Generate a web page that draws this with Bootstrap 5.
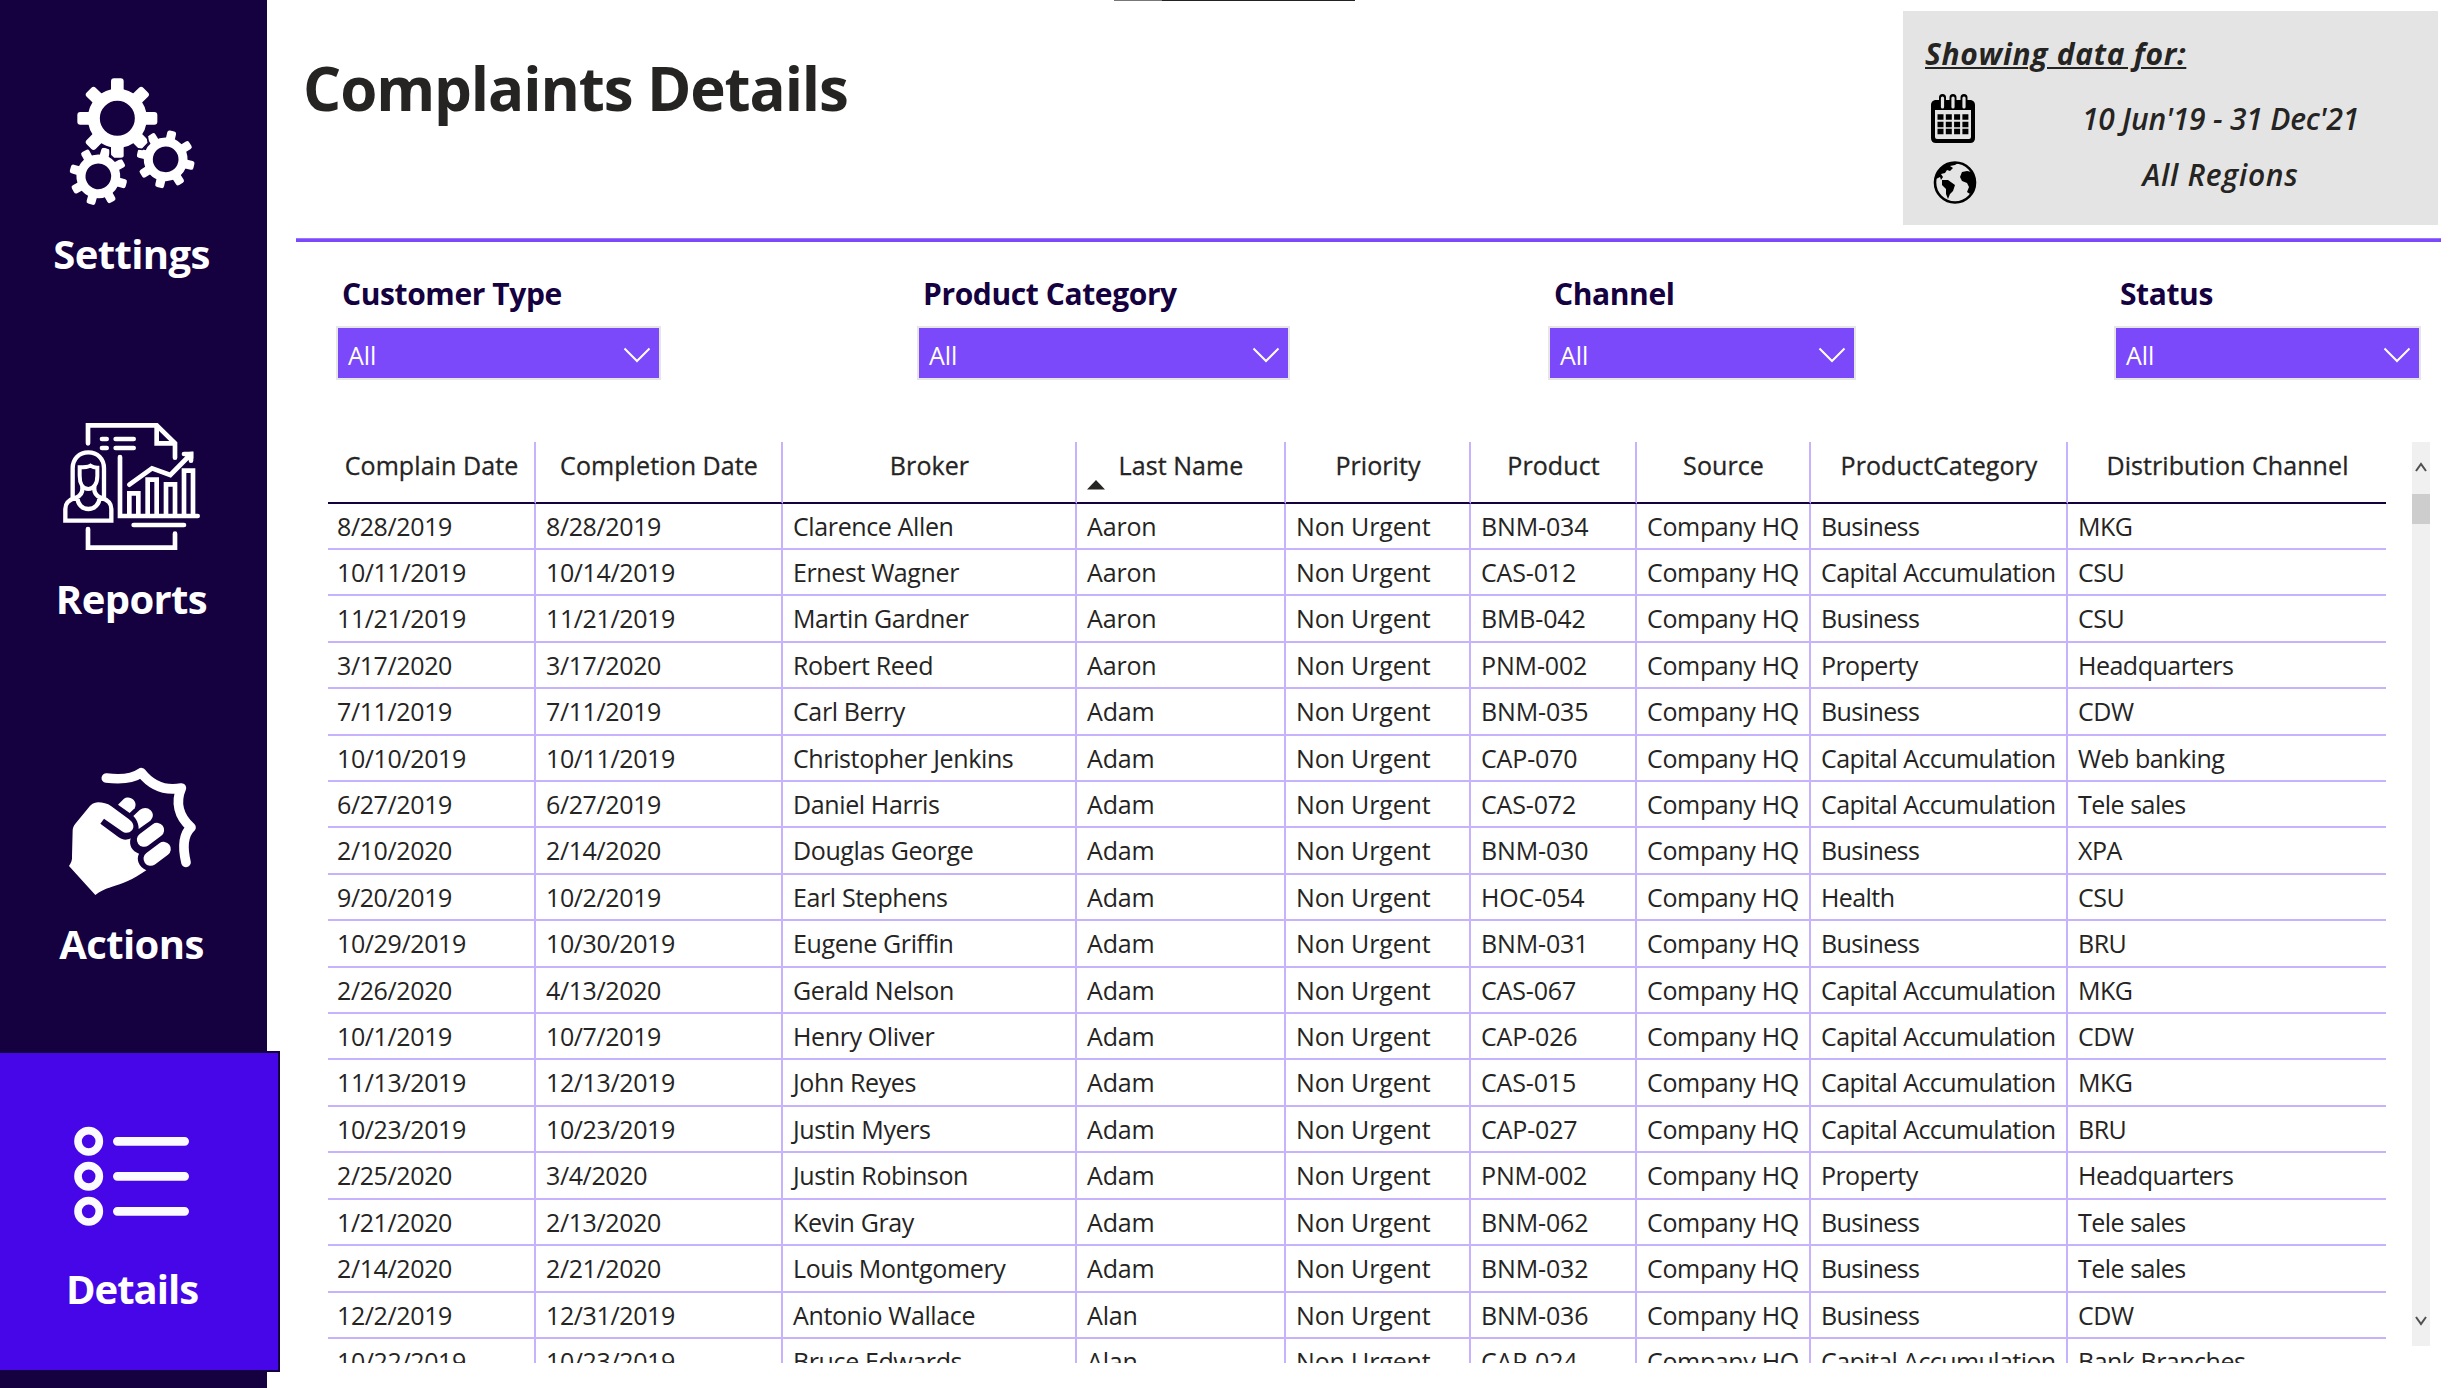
<!DOCTYPE html>
<html lang="en">
<head>
<meta charset="utf-8">
<title>Complaints Details</title>
<meta name="viewport" content="width=device-width, initial-scale=1">
<link href="https://cdn.jsdelivr.net/npm/bootstrap@5.3.0/dist/css/bootstrap.min.css" rel="stylesheet">
<style>
  body { font-family: "Open Sans", "Noto Sans", sans-serif; color: #252423; background: #fff; }
  .page { width: 2452px; height: 1388px; }
  .side { width: 267px; background: #150040; padding-top: 16px; }
  .side-item { width: 267px; height: 345px; color: #fff; font-weight: 700; font-size: 40px; line-height: 60px; letter-spacing: -.6px; text-align: center; text-decoration: none; }
  .side-item svg { width: 267px; height: 210px; margin-bottom: -2px; }
  .side-item span { padding-right: 4px; }
  .side-item.current { width: 280px; height: 321px; background: #4606e8; border: 2px solid #150040; border-left: 0; z-index: 2; letter-spacing: -1px; }
  .side-item.current svg { margin-top: -2px; }
  .side-item.current span { padding-right: 14px; }
  .main { padding-left: 29px; }
  .head { height: 238px; padding: 11px 14px 0 7px; }
  .page-title { font-size: 60px; line-height: 80px; font-weight: 700; letter-spacing: -1.1px; margin-top: 37px; }
  .period { width: 535px; height: 214px; background: #e4e4e4; padding: 23px 22px 0; font-size: 30px; line-height: 40px; font-style: italic; }
  .period-title { font-weight: 700; letter-spacing: .68px; text-decoration: underline; text-decoration-thickness: 2px; text-underline-offset: 2px; }
  .period-row { height: 57.5px; font-weight: 600; }
  .period-row .value { padding-left: 44px; letter-spacing: -.2px; }
  .period-row .region { letter-spacing: .7px; padding-top: 3px; }
  .rule { height: 4px; width: 2145px; background: #7b48fa; border-top: 1px solid #9b75fb; }
  .filters { width: 2085px; margin: 32px 0 0 40px; }
  .filter-name { font-size: 30px; line-height: 40px; font-weight: 700; color: #150040; letter-spacing: -.4px; padding-left: 6px; margin-bottom: 12px; }
  .picker { height: 54px; background: #7b48fa; border: 2px solid #e6e6e6; color: #fff; font-size: 25px; line-height: 50px; padding: 3px 8px 0 10px; }
  .w-customer { width: 325px; } .w-category { width: 373px; margin-left: -2px; } .w-channel { width: 308px; } .w-status { width: 307px; }
  .grid-area { margin: 62px 0 0 32px; width: 2102px; }
  .grid-clip { width: 2058px; height: 921px; overflow: hidden; }
  .grid { table-layout: fixed; width: 2058px; border-collapse: separate; border-spacing: 0; font-size: 25px; line-height: 44.4px; white-space: nowrap; }
  .grid th { height: 62px; padding: 1px 0 0 1px; font-weight: 500; -webkit-text-stroke: .3px #252423; text-align: center; vertical-align: top; border-bottom: 2px solid #150040; border-right: 2px solid #c7b3fd; letter-spacing: .08px; position: relative; }
  .grid td { height: 46.41px; padding: 1px 0 0 10px; line-height: 43.4px; border-bottom: 2px solid #c7b3fd; border-right: 2px solid #c7b3fd; letter-spacing: -.15px; }
  .grid td:first-child { padding-left: 9px; }
  .grid tbody tr:first-child td { height: 46px; line-height: 43px; }
  .grid th:last-child, .grid td:last-child { border-right: 0; }
  .grid td:nth-child(1), .grid td:nth-child(2), .grid td:nth-child(3) { letter-spacing: -.38px; }
  .grid td:nth-child(7) { letter-spacing: -.35px; }
  .grid td:nth-child(8) { letter-spacing: -.58px; }
  .grid td:nth-child(9) { letter-spacing: -.5px; }
  .sort { position: absolute; left: 10px; bottom: 12px; }
  .scroller { width: 18px; height: 904px; background: #f0f0f0; padding: 20px 0; }
  .scroller .thumb { height: 30px; margin-top: 22px; background: #cdcdcd; }
  .notch { position: absolute; left: 1114px; top: 0; width: 241px; height: 1px; background: linear-gradient(90deg, #777 48px, #222 48px); }
</style>
<script src="https://cdn.jsdelivr.net/npm/bootstrap@5.3.0/dist/js/bootstrap.bundle.min.js"></script>
</head>
<body>
<div class="page d-flex position-relative overflow-hidden">
  <div class="notch"></div>

  <nav class="side d-flex flex-column flex-shrink-0">
    <a class="side-item d-flex flex-column flex-shrink-0">
      <svg viewBox="0 -72 801 630" fill="#fff">
        <defs>
          <g id="bigCog">
            <circle r="70.5" fill="none" stroke="#fff" stroke-width="36"/>
            <g id="bt"><rect x="-19" y="-120" width="38" height="42" rx="9"/><rect x="-19" y="78" width="38" height="42" rx="9"/></g>
            <use href="#bt" transform="rotate(45)"/><use href="#bt" transform="rotate(90)"/><use href="#bt" transform="rotate(135)"/>
          </g>
          <g id="smallCog">
            <circle r="52" fill="none" stroke="#fff" stroke-width="27"/>
            <g id="st"><rect x="-13.5" y="-87" width="27" height="34" rx="7"/><rect x="-13.5" y="53" width="27" height="34" rx="7"/></g>
            <use href="#st" transform="rotate(45)"/><use href="#st" transform="rotate(90)"/><use href="#st" transform="rotate(135)"/>
          </g>
        </defs>
        <use href="#bigCog" x="0" y="0" transform="translate(352 235)"/>
        <use href="#smallCog" transform="translate(295 409) rotate(16)"/>
        <use href="#smallCog" transform="translate(497 358) rotate(13)"/>
        <path d="M408 326L427 328L445 309L442 290" fill="none" stroke="#150040" stroke-width="5"/>
        <path d="M299 322L318 320L330 326L331 346L342 356H362L374 354" fill="none" stroke="#150040" stroke-width="5"/>
      </svg>
      <span>Settings</span>
    </a>
    <a class="side-item d-flex flex-column flex-shrink-0">
      <svg viewBox="0 -87 801 630" fill="none" stroke="#fff" stroke-width="14" stroke-linecap="round" stroke-linejoin="miter">
        <path d="M264 160V106H470L525 160V203M470 106V160H525M264 417V473H525V431"/>
        <path d="M306 147H320M347 147H401M306 174H320M347 174H401"/>
        <path d="M360 201V378H593M401 405H552"/>
        <path d="M388 374V310H415V374M443 374V269H470V374M498 374V283H525V374M552 374V242H579V374"/>
        <path d="M388 284L456 235L511 255L570 195M552 192H573V212" />
        <path d="M566 188l12 -1v14z" fill="#fff" stroke-width="4"/>
        <path d="M218 324V235C218 206 238 187 265 187S312 206 312 235V324" stroke-width="13"/>
        <path d="M239 232C252 232 263 231 271 227C277 231 284 233 292 233V257C292 280 282 297 265 297S239 280 239 257Z" stroke-width="12"/>
        <path d="M247 292C249 309 240 318 228 323C205 330 196 339 196 357V392H334V357C334 339 325 330 302 323C290 318 281 309 283 292M232 322C233 343 246 357 265 357S298 343 299 322" stroke-width="13"/>
      </svg>
      <span>Reports</span>
    </a>
    <a class="side-item d-flex flex-column flex-shrink-0">
      <svg viewBox="0 -102 801 630" fill="#fff">
        <path d="M319 114C350 118 393 120 424 98C450 131 490 154 544 144C526 186 535 230 573 262C549 285 548 325 558 367" fill="none" stroke="#fff" stroke-width="29" stroke-linecap="round" stroke-linejoin="round"/>
        <path d="M207 378C214 368 217 360 216 348L218 270C219 262 221 257 226 251L263 206C273 193 282 187 294 187C308 187 322 190 334 199L386 237C401 248 404 261 396 271C388 280 376 281 366 274L312 236L301 251L356 292C368 300 379 302 392 295C386 316 396 334 417 341C408 359 416 379 439 391C397 420 367 432 336 440C313 447 300 454 286 465Z"/>
        <path d="M354 194L371 177C381 170 393 172 401 180C408 188 408 197 404 205L389 219Z"/>
        <path d="M400 228L419 210C430 201 444 202 452 211C461 221 461 232 451 242L416 267C416 249 409 238 400 228Z"/>
        <path d="M432 299L471 270M452 356L491 327" fill="none" stroke="#fff" stroke-width="43" stroke-linecap="round"/>
      </svg>
      <span>Actions</span>
    </a>
    <a class="side-item current d-flex flex-column flex-shrink-0 position-relative">
      <svg viewBox="0 63 801 630" fill="none" stroke="#fafaff">
        <g stroke-width="23"><circle cx="266" cy="334" r="32"/><circle cx="266" cy="439" r="32"/><circle cx="266" cy="544" r="32"/></g>
        <path d="M352 334H554M352 439H554M352 544H554" stroke-width="26" stroke-linecap="round"/>
      </svg>
      <span>Details</span>
    </a>
  </nav>

  <main class="main flex-grow-1">
    <header class="head d-flex justify-content-between align-items-start">
      <h1 class="page-title mb-0">Complaints Details</h1>
      <section class="period">
        <div class="period-title">Showing data for:</div>
        <div class="period-row d-flex align-items-center mt-3">
          <svg class="flex-shrink-0" width="56" height="52" viewBox="0 0 56 52">
            <path fill="#000" fill-rule="evenodd" d="M10 7H46Q50 8 50 12V45Q50 50 45 50H11Q6 50 6 45V12Q6 8 10 7ZM10 17V44Q10 46 12 46H44Q46 46 46 44V17Z"/>
            <path d="M17.500 4.500V13M28 4.500V13M39 4.500V13" stroke="#000" stroke-width="7" stroke-linecap="round"/>
            <path d="M17.500 5V14M28 5V14M39 5V14" stroke="#e4e4e4" stroke-width="3.200" stroke-linecap="round"/>
            <path d="M12.500 24H44M12.500 31.500H44M12.500 38.500H44" stroke="#000" stroke-width="5.500" stroke-dasharray="6 2.300"/>
          </svg>
          <div class="value flex-grow-1 text-center">10 Jun'19 - 31 Dec'21</div>
        </div>
        <div class="period-row d-flex align-items-start pt-1">
          <svg class="flex-shrink-0 mt-1" width="56" height="48" viewBox="0 0 56 48">
            <circle cx="30" cy="26.500" r="20" fill="none" stroke="#000" stroke-width="2.600"/>
            <path d="M30 6C22 6 15 11 12 17L11 23L15 21L16 24L18 21L16 18L20 17L22 14L25 15L28 12L25 10L30 9L33 7Z"/>
            <path d="M17 24L23 24L30 29L28 35L25 38L23 43L21 38L21 33L17 29Z"/>
            <path d="M37 16L42 15L47 16L50 24L49 33L45 38L42 36L44 31L42 27L37 25L35 21Z"/>
          </svg>
          <div class="value region flex-grow-1 text-center">All Regions</div>
        </div>
      </section>
    </header>
    <div class="rule"></div>

    <section class="filters d-flex justify-content-between">
      <div class="w-customer"><div class="filter-name">Customer Type</div>
        <div class="picker d-flex justify-content-between align-items-center"><span>All</span><svg width="28" height="16" viewBox="0 0 28 16"><path d="M1.500 1.500L14 14L26.500 1.500" fill="none" stroke="#fff" stroke-width="2"/></svg></div></div>
      <div class="w-category"><div class="filter-name">Product Category</div>
        <div class="picker d-flex justify-content-between align-items-center"><span>All</span><svg width="28" height="16" viewBox="0 0 28 16"><path d="M1.500 1.500L14 14L26.500 1.500" fill="none" stroke="#fff" stroke-width="2"/></svg></div></div>
      <div class="w-channel"><div class="filter-name">Channel</div>
        <div class="picker d-flex justify-content-between align-items-center"><span>All</span><svg width="28" height="16" viewBox="0 0 28 16"><path d="M1.500 1.500L14 14L26.500 1.500" fill="none" stroke="#fff" stroke-width="2"/></svg></div></div>
      <div class="w-status"><div class="filter-name">Status</div>
        <div class="picker d-flex justify-content-between align-items-center"><span>All</span><svg width="28" height="16" viewBox="0 0 28 16"><path d="M1.500 1.500L14 14L26.500 1.500" fill="none" stroke="#fff" stroke-width="2"/></svg></div></div>
    </section>

    <section class="grid-area d-flex justify-content-between align-items-start">
      <div class="grid-clip">
        <table class="grid">
          <colgroup><col width="208"><col width="247"><col width="294"><col width="209"><col width="185"><col width="166"><col width="174"><col width="257"><col width="318"></colgroup>
          <thead><tr>
            <th>Complain Date</th><th>Completion Date</th><th>Broker</th>
            <th>Last Name<svg class="sort" width="18" height="10" viewBox="0 0 18 10"><path d="M9 0L18 9.500H0Z" fill="#252423"/></svg></th>
            <th>Priority</th><th>Product</th><th>Source</th><th>ProductCategory</th><th>Distribution Channel</th>
          </tr></thead>
          <tbody id="complaints"></tbody>
        </table>
      </div>
      <div class="scroller d-flex flex-column align-items-center">
        <svg width="12" height="10" viewBox="0 0 12 10"><path d="M1 9L6 2L11 9" fill="none" stroke="#505050" stroke-width="2"/></svg>
        <div class="thumb w-100"></div>
        <svg class="mt-auto" width="12" height="10" viewBox="0 0 12 10"><path d="M1 1L6 8L11 1" fill="none" stroke="#505050" stroke-width="2"/></svg>
      </div>
    </section>
  </main>
</div>

<script>
  // complain date | completion date | broker | last name | product | category | channel
  const complaints = `8/28/2019|8/28/2019|Clarence Allen|Aaron|BNM-034|Business|MKG
10/11/2019|10/14/2019|Ernest Wagner|Aaron|CAS-012|Capital Accumulation|CSU
11/21/2019|11/21/2019|Martin Gardner|Aaron|BMB-042|Business|CSU
3/17/2020|3/17/2020|Robert Reed|Aaron|PNM-002|Property|Headquarters
7/11/2019|7/11/2019|Carl Berry|Adam|BNM-035|Business|CDW
10/10/2019|10/11/2019|Christopher Jenkins|Adam|CAP-070|Capital Accumulation|Web banking
6/27/2019|6/27/2019|Daniel Harris|Adam|CAS-072|Capital Accumulation|Tele sales
2/10/2020|2/14/2020|Douglas George|Adam|BNM-030|Business|XPA
9/20/2019|10/2/2019|Earl Stephens|Adam|HOC-054|Health|CSU
10/29/2019|10/30/2019|Eugene Griffin|Adam|BNM-031|Business|BRU
2/26/2020|4/13/2020|Gerald Nelson|Adam|CAS-067|Capital Accumulation|MKG
10/1/2019|10/7/2019|Henry Oliver|Adam|CAP-026|Capital Accumulation|CDW
11/13/2019|12/13/2019|John Reyes|Adam|CAS-015|Capital Accumulation|MKG
10/23/2019|10/23/2019|Justin Myers|Adam|CAP-027|Capital Accumulation|BRU
2/25/2020|3/4/2020|Justin Robinson|Adam|PNM-002|Property|Headquarters
1/21/2020|2/13/2020|Kevin Gray|Adam|BNM-062|Business|Tele sales
2/14/2020|2/21/2020|Louis Montgomery|Adam|BNM-032|Business|Tele sales
12/2/2019|12/31/2019|Antonio Wallace|Alan|BNM-036|Business|CDW
10/22/2019|10/23/2019|Bruce Edwards|Alan|CAP-024|Capital Accumulation|Bank Branches`;
  document.getElementById("complaints").innerHTML = complaints.split("\n").map(line => {
    const c = line.split("|");
    c.splice(4, 0, "Non Urgent");
    c.splice(6, 0, "Company HQ");
    return "<tr>" + c.map(v => "<td>" + v + "</td>").join("") + "</tr>";
  }).join("");
</script>
</body>
</html>
